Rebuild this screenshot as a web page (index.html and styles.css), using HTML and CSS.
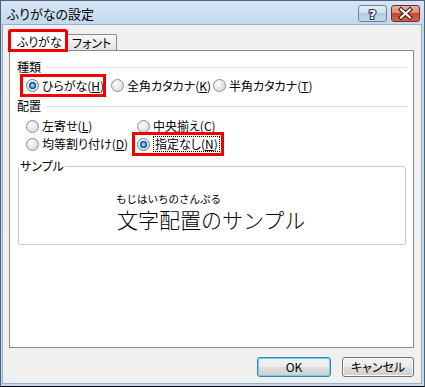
FILE: index.html
```html
<!DOCTYPE html>
<html lang="ja">
<head>
<meta charset="utf-8">
<title>ふりがなの設定</title>
<link rel="stylesheet" href="styles.css">
</head>
<body>
<div class="window">
  <div class="titlebar">
    <span class="title">ふりがなの設定</span>
    <div class="caption-btns">
      <span class="cbtn help">
        <svg width="29" height="17" viewBox="0 0 29 17"><text x="14.5" y="13.5" text-anchor="middle" class="qmark">?</text></svg>
      </span>
      <span class="cbtn close">
        <svg width="29" height="17" viewBox="0 0 29 17">
          <path d="M10 4.5 L19 12.5 M19 4.5 L10 12.5" stroke="#3a1a14" stroke-width="4.2" stroke-linecap="square"/>
          <path d="M10 4.5 L19 12.5 M19 4.5 L10 12.5" stroke="#ffffff" stroke-width="2.2" stroke-linecap="square"/>
        </svg>
      </span>
    </div>
  </div>
  <div class="client">
    <div class="tabs">
      <div class="tab active hl">ふりがな</div>
      <div class="tab">フォント</div>
    </div>
    <div class="panel">
      <div class="sechead"><span>種類</span><i class="rule"></i></div>
      <div class="row row1">
        <label class="opt r1a hl"><span class="radio on"></span><span class="lbl">ひらがな(<u>H</u>)</span></label>
        <label class="opt r1b"><span class="radio"></span><span class="lbl">全角カタカナ(<u>K</u>)</span></label>
        <label class="opt r1c"><span class="radio"></span><span class="lbl">半角カタカナ(<u>T</u>)</span></label>
      </div>
      <div class="sechead sec2"><span>配置</span><i class="rule"></i></div>
      <div class="row row2">
        <label class="opt c1"><span class="radio"></span><span class="lbl">左寄せ(<u>L</u>)</span></label>
        <label class="opt c2"><span class="radio"></span><span class="lbl">中央揃え(<u>C</u>)</span></label>
      </div>
      <div class="row row3">
        <label class="opt c1"><span class="radio"></span><span class="lbl">均等割り付け(<u>D</u>)</span></label>
        <label class="opt c2 hl"><span class="radio on"></span><span class="lbl focus">指定なし(<u>N</u>)</span></label>
      </div>
      <fieldset class="sample">
        <legend>サンプル</legend>
        <div class="sample-text">
          <div class="ruby">もじはいちのさんぷる</div>
          <div class="main">文字配置のサンプル</div>
        </div>
      </fieldset>
    </div>
    <div class="buttons">
      <button class="btn default">OK</button>
      <button class="btn cancel">キャンセル</button>
    </div>
  </div>
</div>
</body>
</html>
```

FILE: styles.css
```css
html, body {
  margin: 0;
  padding: 0;
  background: #ffffff;
}

body {
  font-family: "Noto Sans CJK JP", "Noto Sans", sans-serif;
  font-size: 12px;
  color: #000;
  font-feature-settings: "palt";
}

.window {
  width: 425px;
  height: 387px;
  box-sizing: border-box;
  border: 1px solid #4d6379;
  border-bottom-color: #000;
  background: linear-gradient(#d6e5f5 0, #c2d7ed 25px, #c5d9ee 100%);
  display: flex;
  flex-direction: column;
}

.titlebar {
  height: 24px;
  display: flex;
  align-items: flex-start;
  justify-content: space-between;
  padding: 0 4px 0 6px;
}

.title {
  font-size: 13px;
  line-height: 26px;
  color: #000;
}

.caption-btns {
  display: flex;
  gap: 4px;
  margin-top: 4px;
}

.cbtn {
  display: block;
  width: 29px;
  height: 17px;
  box-sizing: border-box;
  border-radius: 3px;
  overflow: hidden;
}

.cbtn svg {
  display: block;
  margin: -1px;
}

.help {
  border: 1px solid #6a7f96;
  background: linear-gradient(#e4eef8 0, #d2e1f1 45%, #b2cbe5 50%, #c3d8ee 100%);
}

.qmark {
  font-family: "DejaVu Sans", sans-serif;
  font-size: 13px;
  font-weight: bold;
  fill: #ffffff;
  stroke: #2c3a4a;
  stroke-width: 2.2px;
  paint-order: stroke;
}

.close {
  border: 1px solid #6b3129;
  background: linear-gradient(#e9b0a3 0, #dc8a76 45%, #c9492f 50%, #d2644a 100%);
}

.client {
  height: 358px;
  box-sizing: border-box;
  margin: 0 3px 0 2px;
  background: #f0f0f0;
  box-shadow: 0 0 0 1px #93b0cc;
  padding: 4px 7px 0 6px;
  display: flex;
  flex-direction: column;
}

.hl {
  outline: 3px solid #f20000;
}

.tabs {
  display: flex;
  align-items: flex-end;
  height: 21px;
}

.tab {
  box-sizing: border-box;
  border: 1px solid #898c95;
  border-bottom: none;
  line-height: 16px;
}

.tab.active {
  position: relative;
  z-index: 1;
  width: 58px;
  height: 21px;
  margin-bottom: -1px;
  background: #ffffff;
  padding: 3px 0 0 7px;
  border-radius: 2px 2px 0 0;
  outline-offset: -2px;
}

.tab:not(.active) {
  width: 50px;
  height: 16px;
  border-left: none;
  background: linear-gradient(#f6f6f6, #e4e4e4);
  padding: 0 0 0 5px;
  border-radius: 0 2px 0 0;
}

.panel {
  height: 298px;
  box-sizing: border-box;
  border: 1px solid #898c95;
  background: #ffffff;
  display: flex;
  flex-direction: column;
}

.sechead {
  display: flex;
  align-items: center;
  height: 14px;
  margin: 9px 6px 0 7px;
  line-height: 14px;
}

.sechead .rule {
  flex: 1;
  height: 1px;
  margin-left: 5px;
  background: #d5dfe5;
}

.sechead.sec2 {
  margin-top: 5px;
}

.row {
  display: flex;
  align-items: center;
  padding-left: 13px;
}

.row1 {
  height: 17px;
  margin-top: 3px;
}

.row2 {
  height: 18px;
  margin-top: 4px;
}

.row3 {
  height: 18px;
}

.opt {
  display: flex;
  align-items: center;
  gap: 3px;
  height: 100%;
  box-sizing: border-box;
  padding-left: 3px;
  line-height: 14px;
  white-space: nowrap;
}

.lbl {
  display: block;
}

.opt u {
  text-decoration: underline;
  text-underline-offset: 1px;
}

.r1a { width: 80px; }
.r1b { width: 102px; margin-left: 5px; }
.c1 { width: 112px; }
.c2 { width: 86px; padding-left: 2px; }

.radio {
  flex: none;
  width: 13px;
  height: 13px;
  box-sizing: border-box;
  border-radius: 50%;
  border: 1px solid #8c8f92;
  background: radial-gradient(circle at 38% 35%, #ffffff 0, #eeeeee 35%, #cdcfd1 100%);
}

.radio.on {
  border-color: #6b7c8c;
  background:
    radial-gradient(circle at 50% 50%, #b9ecff 0, #4fb5ee 1.6px, #1a6fc0 2.6px, #15406a 3.4px, rgba(21,64,106,0) 3.9px),
    radial-gradient(circle at 38% 35%, #ffffff 0, #eeeeee 35%, #cdcfd1 100%);
}

.focus {
  border: 1px dotted #000;
  padding: 0 1px;
  line-height: 14px;
}

.sample {
  margin: 6px 7px 0 8px;
  padding: 20px 0 13px 0;
  border: 1px solid #c3ced8;
  border-radius: 3px;
  min-width: 0;
}

.sample legend {
  padding: 0 1px;
  margin-left: 0;
  line-height: 14px;
}

.sample-text {
  display: flex;
  flex-direction: column;
  align-items: flex-start;
  gap: 2px;
  width: 190px;
  margin: 0 auto;
  font-feature-settings: normal;
}

.ruby {
  font-size: 10.5px;
  line-height: 12px;
  margin-left: -1px;
}

.main {
  font-size: 21px;
  line-height: 24px;
  font-weight: 300;
}

.buttons {
  display: flex;
  justify-content: flex-end;
  gap: 11px;
  margin-top: 9px;
}

.btn {
  height: 20px;
  box-sizing: border-box;
  font-family: "Noto Sans CJK JP", "Noto Sans", sans-serif;
  font-size: 12px;
  font-feature-settings: "palt";
  line-height: 16px;
  padding: 0;
  border-radius: 3px;
  background: linear-gradient(#f2f2f2 0, #ebebeb 48%, #dddddd 52%, #cfcfcf 100%);
  color: #000;
}

.btn.default {
  width: 74px;
  border: 1px solid #3c7fb1;
  box-shadow: inset 0 0 0 1px #5fd6f7;
}

.btn.cancel {
  width: 72px;
  border: 1px solid #707070;
  box-shadow: inset 0 0 0 1px #fbfbfb;
}
```
